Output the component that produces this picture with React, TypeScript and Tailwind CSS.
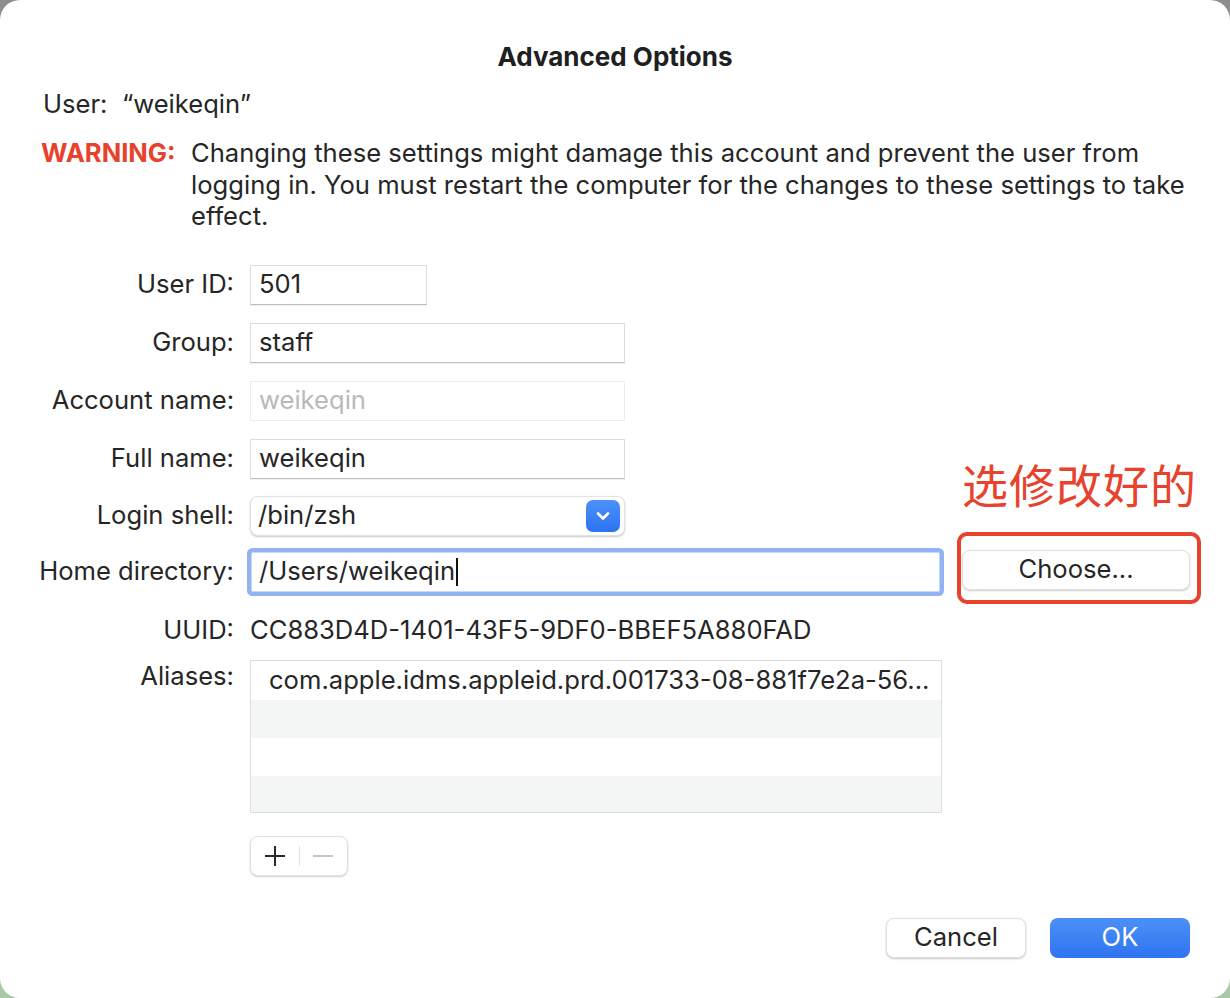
import type { ReactNode } from "react"

const font = { fontFamily: "Inter, 'Noto Sans CJK SC', sans-serif" }

function Label({ children, top }: { children: ReactNode; top?: boolean }) {
  return (
    <div
      className={`w-[235px] shrink-0 text-right pr-[1px] ${top ? "self-start leading-[32px]" : ""}`}
    >
      {children}
    </div>
  )
}

function Field({ value, width, disabled }: { value: string; width: string; disabled?: boolean }) {
  return (
    <div
      className={`${width} ml-[15px] h-[40px] flex items-center pl-[8px] bg-white border ${
        disabled
          ? "border-[#ececec] text-[#b9b9b9]"
          : "border-[#dcdcdc] border-b-[#bdbdbd] shadow-[0_1px_0_rgba(0,0,0,0.05)]"
      }`}
    >
      {value}
    </div>
  )
}

export default function App() {
  return (
    <div className="w-[1230px] h-[998px] bg-gradient-to-b from-[#8d8d8d] via-[#b5b5b5] to-[#a9c9a6]" style={font}>
      <div className="w-full h-full rounded-[20px] bg-white text-[25.6px] text-[#262626] flex flex-col">
        <div className="pt-[41px] leading-[32px] text-center font-bold text-[26px] text-[#202020]">
          Advanced Options
        </div>

        <div className="mt-[15px] pl-[43px] leading-[32px]">User:&nbsp; “weikeqin”</div>

        <div className="mt-[17px] pl-[41px] flex leading-[31.5px]">
          <div className="w-[150px] shrink-0 font-bold text-[#e8412c]">WARNING:</div>
          <div className="w-[1005px]">
            Changing these settings might damage this account and prevent the user from logging in. You
            must restart the computer for the changes to these settings to take effect.
          </div>
        </div>

        <div className="mt-[33px] flex flex-col">
          <div className="flex items-center h-[40px]">
            <Label>User ID:</Label>
            <Field value="501" width="w-[177px]" />
          </div>

          <div className="mt-[18px] flex items-center h-[40px]">
            <Label>Group:</Label>
            <Field value="staff" width="w-[375px]" />
          </div>

          <div className="mt-[18px] flex items-center h-[40px]">
            <Label>Account name:</Label>
            <Field value="weikeqin" width="w-[375px]" disabled />
          </div>

          <div className="mt-[18px] flex items-center h-[40px]">
            <Label>Full name:</Label>
            <Field value="weikeqin" width="w-[375px]" />
          </div>

          <div className="mt-[17px] flex items-center h-[40px]">
            <Label>Login shell:</Label>
            <div className="ml-[15px] w-[375px] h-[40px] rounded-[8px] bg-white border border-[#e2e2e2] shadow-[0_1px_2px_rgba(0,0,0,0.22)] flex items-center justify-between pl-[7px] pr-[4px]">
              <span>/bin/zsh</span>
              <div className="w-[34px] h-[32px] rounded-[7px] bg-gradient-to-b from-[#4b91f8] to-[#2c73f1] flex items-center justify-center">
                <svg width="14" height="10" viewBox="0 0 14 10" fill="none">
                  <path d="M2 2.5 L7 7.5 L12 2.5" stroke="white" strokeWidth="2.6" strokeLinecap="round" strokeLinejoin="round" />
                </svg>
              </div>
            </div>
          </div>

          <div className="mt-[16px] flex items-center h-[40px]">
            <Label>Home directory:</Label>
            <div className="ml-[16px] w-[689px] h-[40px] flex items-center pl-[7px] bg-white border border-[#c9d8f5] shadow-[0_0_0_4px_#8fb3f3] rounded-[2px]">
              <span>/Users/weikeqin</span>
              <span className="ml-[1px] w-[2px] h-[28px] bg-[#111]" />
            </div>
            <div className="relative ml-[22px] -mt-[4px]">
              <div className="absolute left-0 top-[-87px] whitespace-nowrap text-[46px] leading-none text-[#e8412c] tracking-[1px]">
                选修改好的
              </div>
              <div className="w-[228px] h-[40px] rounded-[8px] bg-white border border-[#e0e0e0] shadow-[0_1px_2px_rgba(0,0,0,0.2)] flex items-center justify-center">
                Choose...
              </div>
              <div className="absolute left-[-5px] top-[-18px] w-[244px] h-[72px] border-[4px] border-[#e8412c] rounded-[10px]" />
            </div>
          </div>

          <div className="mt-[19px] flex items-center h-[40px]">
            <Label>UUID:</Label>
            <div className="ml-[15px]">CC883D4D-1401-43F5-9DF0-BBEF5A880FAD</div>
          </div>

          <div className="mt-[9px] flex">
            <Label top>Aliases:</Label>
            <div className="ml-[15px] w-[692px] border border-[#dcdcdc] flex flex-col">
              <div className="h-[39px] bg-white pl-[18px] flex items-center">
                com.apple.idms.appleid.prd.001733-08-881f7e2a-56...
              </div>
              <div className="h-[38px] bg-[#f4f5f5]" />
              <div className="h-[38px] bg-white" />
              <div className="h-[36px] bg-[#f4f5f5]" />
            </div>
          </div>

          <div className="mt-[23px] ml-[250px] w-[98px] h-[40px] rounded-[8px] bg-white border border-[#e2e2e2] shadow-[0_1px_2px_rgba(0,0,0,0.2)] flex items-center">
            <div className="w-[48px] flex items-center justify-center">
              <svg width="22" height="22" viewBox="0 0 22 22">
                <path d="M11 1 V21 M1 11 H21" stroke="#2a2a2a" strokeWidth="2" />
              </svg>
            </div>
            <div className="w-[1px] h-[20px] bg-[#e0e0e0]" />
            <div className="w-[48px] flex items-center justify-center">
              <svg width="22" height="22" viewBox="0 0 22 22">
                <path d="M1 11 H21" stroke="#c6c6c6" strokeWidth="2" />
              </svg>
            </div>
          </div>
        </div>

        <div className="mt-[42px] pr-[40px] flex justify-end gap-[24px]">
          <div className="w-[140px] h-[40px] rounded-[8px] bg-white border border-[#e0e0e0] shadow-[0_1px_2px_rgba(0,0,0,0.22)] flex items-center justify-center">
            Cancel
          </div>
          <div className="w-[140px] h-[40px] rounded-[8px] bg-gradient-to-b from-[#4b90f7] to-[#2f74f1] text-white flex items-center justify-center">
            OK
          </div>
        </div>
      </div>
    </div>
  )
}
